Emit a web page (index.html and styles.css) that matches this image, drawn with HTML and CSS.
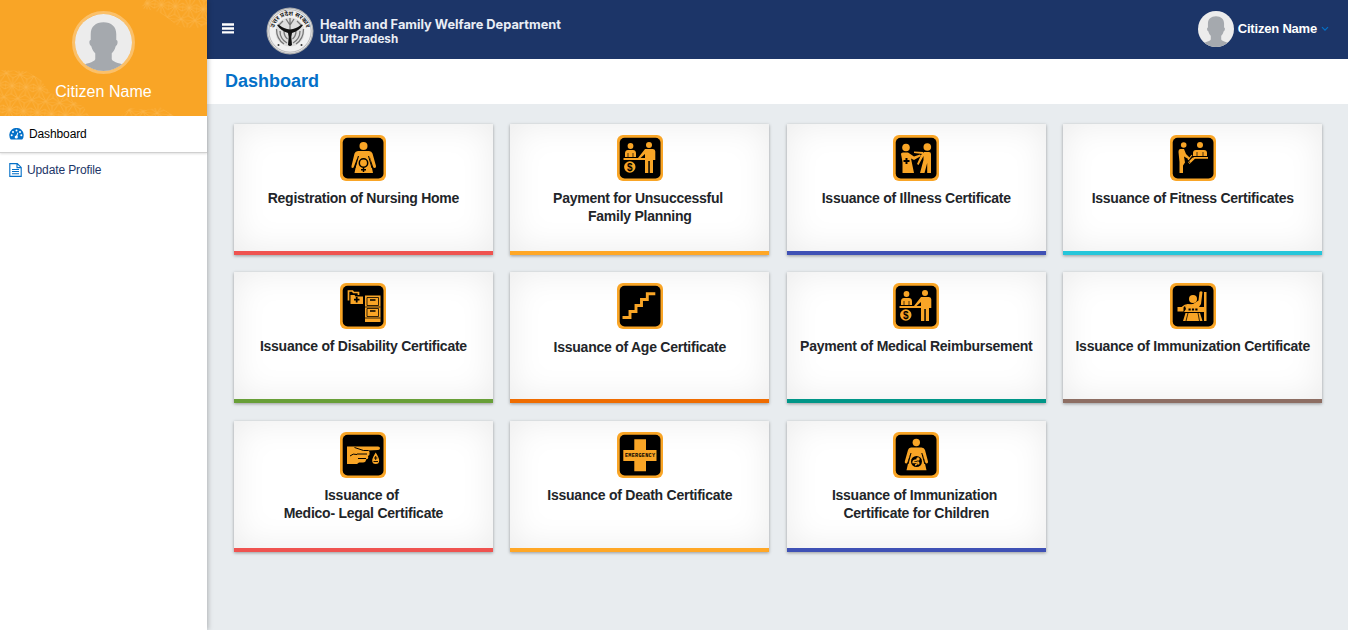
FILE: index.html
```html
<!DOCTYPE html>
<html lang="en">
<head>
<meta charset="utf-8">
<title>Dashboard</title>
<link rel="stylesheet" href="styles.css">
</head>
<body>
<svg class="defs" aria-hidden="true">
  <defs>
    <symbol id="avatar" viewBox="0 0 58 58">
      <rect width="58" height="58" fill="#ececec"/>
      <path fill="#a5a9ae" d="M29 8.500c8 0 13 4.500 13 12v6c2 0 1.800 5-.6 6.200-1 3.800-2.300 5.300-4 7.300v6c1.300 3.500 10 4 14.600 7V58H6v-5c4.600-3 13.300-3.500 14.600-7v-6c-1.700-2-3-3.500-4-7.300-2.400-1.200-2.600-6.200-.6-6.200v-6c0-7.500 5-12 13-12z"/>
    </symbol>
    <symbol id="frame" viewBox="0 0 46 46">
      <rect width="46" height="46" rx="6" fill="#f9a526"/>
      <rect x="2.700" y="2.700" width="40.800" height="40.800" rx="5" fill="#000"/>
    </symbol>
    <symbol id="counter" viewBox="0 0 46 46">
      <g fill="#f9a526">
        <circle cx="13.500" cy="11" r="2.900"/>
        <path d="M8 22v-3.500Q8 15 11 15h5q3 0 3 3.500V22zM6.500 23H38v2H6.500z"/>
        <circle cx="32" cy="10" r="3"/>
        <path d="M28 14h8q2.300 0 2.300 2.500V25H36v13h-3.200V26h-1.500v12H28V19l-4.500 4H21z"/>
        <circle cx="12.800" cy="32" r="5.700"/>
      </g>
      <path d="M11 18v4M16 18v4" stroke="#000" stroke-width=".7"/>
      <text class="dollar" x="12.800" y="35.600" text-anchor="middle">$</text>
    </symbol>
    <pattern id="mesh" width="14" height="24" patternUnits="userSpaceOnUse" patternTransform="rotate(6)">
      <path d="M0 0h14M0 12h14M0 0l7 12 7-12M0 24l7-12 7 12M0 0l7 4 7-4M7 4v8M0 24l7-4 7 4M7 20v-8M0 8l7 4M14 8l-7 4M0 8v8l7-4 7 4" fill="none" stroke="#ffc873" stroke-width=".7"/>
    </pattern>
  </defs>
</svg>
<div class="layout">
  <aside class="sidebar">
    <div class="profile">
      <svg class="profile-mesh" viewBox="0 0 207 116">
        <path fill="url(#mesh)" d="M141 8l5-8h61v25l-10 3-18-1-10-8-10-7zM0 70l26 1 15 9 9 13 19 5 15 9 5 9H0zM121 116l9-8 16 2 14-3 14 9z"/>
      </svg>
      <svg class="profile-photo"><use href="#avatar"/></svg>
      <div class="profile-name">Citizen Name</div>
    </div>
    <nav>
      <a class="nav-item active">
        <svg width="15" height="12" viewBox="0 0 15 12"><path fill="#0470c8" d="M1.800 11.500A7.200 7.200 0 1 1 13.200 11.500z"/><g fill="#fff"><circle cx="2.700" cy="7.300" r="1"/><circle cx="4" cy="4" r="1"/><circle cx="7.500" cy="2.600" r="1"/><circle cx="11" cy="4" r="1"/><circle cx="12.300" cy="7.300" r="1"/><circle cx="7.300" cy="9" r="1.600"/><path d="M8.500 4.500l.8.300L8 9H6.700z"/></g></svg>
        <span>Dashboard</span>
      </a>
      <a class="nav-item">
        <svg width="13" height="14" viewBox="0 0 13 14"><path d="M.8.600h7.500l3.900 3.800v9H.8zM8 .6v4h4M3 6.500h7M3 8.500h7M3 10.700h7" fill="none" stroke="#0470c8" stroke-width="1.100"/></svg>
        <span>Update Profile</span>
      </a>
    </nav>
  </aside>
  <div class="main">
    <header class="topbar">
      <svg class="burger" viewBox="0 0 12 11"><path d="M0 .2h12v2.500H0zM0 4.200h12v2.500H0zM0 8.200h12v2.300H0z" fill="#fff"/></svg>
      <svg class="emblem" viewBox="0 0 48 48">
        <defs><path id="arc" d="M8 29a16.500 16.500 0 1 1 32 0"/></defs>
        <circle cx="24" cy="24" r="23.500" fill="#a9abad"/>
        <circle cx="24" cy="24" r="22.300" fill="#f1f1f1"/>
        <circle cx="24" cy="24" r="21.200" fill="none" stroke="#8b8c8e" stroke-width=".6"/>
        <circle cx="24" cy="25" r="14.500" fill="#dedede"/>
        <path d="M10.500 22q0 10 7.500 15M37.500 22q0 10-7.500 15M14 24q0 8 7 12M34 24q0 8-7 12M18 24q0 5 3.500 8M30 24q0 5-3.500 8M17 14l-4 4M31 14l4 4M20 12l4 6 4-6M24 11v12" stroke="#777" stroke-width="1.300" fill="none"/>
        <path d="M11 18l1.500-.5Q18 22 24 22.500 30 22 35.500 17.500l1.500.5q-4 6-11 8l-.7 4 .7 8q-2 2-4 0l.7-8-.7-4q-7-2-11-8z" fill="#111"/>
        <text class="emblem-text"><textPath href="#arc" startOffset="50%" text-anchor="middle">उत्तर प्रदेश सरकार</textPath></text>
        <circle cx="12.500" cy="38" r="1" fill="#333"/><circle cx="35.500" cy="38" r="1" fill="#333"/>
      </svg>
      <div class="brand">
        <div class="brand-title">Health and Family Welfare Department</div>
        <div class="brand-sub">Uttar Pradesh</div>
      </div>
      <div class="user">
        <svg class="user-photo"><use href="#avatar"/></svg>
        <span>Citizen Name</span>
        <svg width="8" height="6" viewBox="0 0 8 6"><path d="M1 1.200l3 3 3-3" fill="none" stroke="#0470c8" stroke-width="1.200"/></svg>
      </div>
    </header>
    <div class="page-head"><h1>Dashboard</h1></div>
    <main class="cards">
      <article class="card red">
        <svg class="icon" viewBox="0 0 46 46"><use href="#frame"/>
          <g fill="#f9a526"><circle cx="23.500" cy="11" r="4"/><path d="M18 16h11q2.700 0 3.500 2.500L36 31q.4 2-1.500 2-1 0-1.500-1.500L29.500 21 33 38H14.500L18 21l-4 10.500q-.5 1.500-1.500 1.500-1.500 0-1-2l3-12.500Q15.300 16 18 16z"/></g>
          <path d="M18.500 21L15 33M28.500 21L32 33" stroke="#000"/>
          <circle cx="23.500" cy="28" r="4.200" fill="none" stroke="#000" stroke-width="1.500"/><path d="M23.500 32v5M21 34.700h5" stroke="#000" stroke-width="1.500"/>
        </svg>
        <h2>Registration of Nursing Home</h2>
      </article>
      <article class="card amber">
        <svg class="icon" viewBox="0 0 46 46"><use href="#frame"/><use href="#counter"/></svg>
        <h2>Payment for Unsuccessful&nbsp;<br>Family Planning</h2>
      </article>
      <article class="card indigo">
        <svg class="icon" viewBox="0 0 46 46"><use href="#frame"/>
          <g fill="#f9a526"><circle cx="13" cy="12.500" r="3.800"/><path d="M10 17.500h5l6 4 6-2 1 1.500-7 4-3-1.500 3 14.500H9.500V27L8 19q0-1.500 2-1.500zM21 16.500l9 .5v2l-9-1z"/><circle cx="34.300" cy="12" r="3.800"/><path d="M31 17h5q2 0 2 2v19h-3.800V28L31.500 38H27l3.500-13v-4l-5 9-1.500-1L28 20z"/></g>
          <path d="M13.500 23v6M10.500 26h6" stroke="#000" stroke-width="2"/>
        </svg>
        <h2>Issuance of Illness Certificate</h2>
      </article>
      <article class="card cyan">
        <svg class="icon" viewBox="0 0 46 46"><use href="#frame"/>
          <g fill="#f9a526"><circle cx="13.700" cy="10" r="2.800"/><path d="M10.500 14h3.500l2 5 4 4-1 1.500-5-3 1 6-2 3v7.500H9.500V27L8.500 17q0-3 2-3z"/><circle cx="30" cy="10" r="3"/><path d="M23 21v-3q0-3 3-3h8q3 0 3 3v3z"/><path d="M18 27l6-5h14v1.800H25L19.500 29z"/></g>
          <path d="M27 17v4M33 17v4M20 28l-2-3" stroke="#000" stroke-width=".7"/><path d="M18 25l4-5M20 26.500l3-3.500" stroke="#f9a526" stroke-width="1.200"/>
        </svg>
        <h2>Issuance of Fitness Certificates</h2>
      </article>
      <article class="card green">
        <svg class="icon" viewBox="0 0 46 46"><use href="#frame"/>
          <path d="M8.500 17.500V8h4l1 1.500h5v2.500" fill="none" stroke="#f9a526" stroke-width="1.700"/>
          <path fill="#f9a526" d="M10.500 12h4l1 1.500h7.500V21H10.500zM25 12.500h15.500V39H25z"/>
          <path d="M16.700 14v5.500M14 16.700h5.500" stroke="#000" stroke-width="1.800"/>
          <g fill="none" stroke="#000" stroke-width=".8"><path d="M27 14.500h11.500v8H27zM27 25.500h11.500v8H27zM25 24h15.500M25 35h15.500"/><path d="M30 17h5.500M30 28h5.500" stroke-width="1.500"/></g>
        </svg>
        <h2>Issuance of Disability Certificate</h2>
      </article>
      <article class="card orange lower">
        <svg class="icon" viewBox="0 0 46 46"><use href="#frame"/>
          <path d="M5.500 34.500H13v-6h6v-6h5.500v-6h5.800v-5.700h8" fill="none" stroke="#f9a526" stroke-width="2.900"/>
        </svg>
        <h2>Issuance of Age Certificate</h2>
      </article>
      <article class="card teal">
        <svg class="icon" viewBox="0 0 46 46"><use href="#frame"/><use href="#counter"/></svg>
        <h2>Payment of Medical Reimbursement</h2>
      </article>
      <article class="card brown">
        <svg class="icon" viewBox="0 0 46 46"><use href="#frame"/>
          <g fill="#f9a526"><circle cx="23" cy="16" r="4"/><path d="M7.500 24h6v4.500h-6zM34 9h2.500v29H34zM28 24h8v5h-8zM15 23q2-2 8-2l5.500-3.500L29.500 9q1.500-1.500 3 0L31 21l-2 3v5H14l2-3z"/><path d="M15.500 30H30l2.500 8H13z"/></g>
          <path d="M12 24.500q5-5 10-1.500" fill="none" stroke="#f9a526" stroke-width="1.300"/><path d="M18.500 26.500h9.500" stroke="#000" stroke-width="2.200" stroke-dasharray="2.200 1.200"/><path d="M18 30l-2 8M28 30l1.500 8" stroke="#000" stroke-width=".8"/>
        </svg>
        <h2>Issuance of Immunization Certificate</h2>
      </article>
      <article class="card red">
        <svg class="icon" viewBox="0 0 46 46"><use href="#frame"/>
          <path fill="#f9a526" d="M7 14.500h31q2 0 2 1.800t-2 1.800l-10.500.4q2.500.5 2 2.500.5 2.500-1.500 3 1 3-2 3.500 0 3-3 3h-4L17 32H7z"/>
          <path d="M14.500 15.500l9 3h5M17 22h10M18 26.500h8M10 24q3-3 7-1.500" stroke="#000" fill="none"/>
          <path fill="#f9a526" d="M35.700 20.500q3.500 5.500 3.500 8a3.500 3.500 0 0 1-7 0q0-2.500 3.500-8z"/><path d="M35.700 24v4M34 26h3.400M33.500 29.500h4.500" stroke="#000" stroke-width=".9"/>
        </svg>
        <h2>Issuance of&nbsp;<br>Medico- Legal Certificate</h2>
      </article>
      <article class="card amber">
        <svg class="icon" viewBox="0 0 46 46"><use href="#frame"/>
          <path fill="#f9a526" d="M17.300 7.300H29V18h10.500v11H29v10.300H17.300V29H6.300V18h11z"/>
          <text class="emergency" x="23" y="25.300" text-anchor="middle" textLength="30" lengthAdjust="spacing">EMERGENCY</text>
        </svg>
        <h2>Issuance of Death Certificate</h2>
      </article>
      <article class="card indigo">
        <svg class="icon" viewBox="0 0 46 46"><use href="#frame"/>
          <g fill="#f9a526"><circle cx="23.300" cy="10.500" r="3.700"/><path d="M18 15.500h10.500q2.800 0 3.500 2.500l3 11.500q.3 2-1.400 2-1 0-1.400-1.300L29.500 21l4 17.300h-20L17.500 21l-3 9.200q-.4 1.300-1.400 1.300-1.700 0-1.300-2L15 18q.6-2.500 3-2.500z"/></g>
          <path d="M18 21l-3 11M28.800 21l3 11" stroke="#000"/><circle cx="23.500" cy="29.500" r="5.500"/><circle cx="25" cy="27" r="1.700" fill="#f9a526"/><path d="M24 28q-4 0-4 2.500h4q1 2-2 2.500M24.500 29.500q2 1 1 3" fill="none" stroke="#f9a526" stroke-width="1.300"/>
        </svg>
        <h2>Issuance of Immunization&nbsp;<br>Certificate for Children</h2>
      </article>
    </main>
  </div>
</div>
</body>
</html>
```
FILE: styles.css
```css
* { box-sizing: border-box; }
body {
  margin: 0;
  height: 630px;
  overflow: hidden;
  background: #e8ecef;
  font-family: "Liberation Sans", Arial, sans-serif;
}
h1, h2 { margin: 0; }
.defs { position: absolute; width: 0; height: 0; }
.layout { display: flex; height: 630px; }

.sidebar {
  position: relative;
  z-index: 1;
  flex: 0 0 207px;
  background: #fff;
  box-shadow: 1px 0 5px rgba(0, 0, 0, .25);
}
.profile {
  position: relative;
  height: 116px;
  padding-top: 11px;
  background: #f9a526;
  text-align: center;
}
.profile-mesh { position: absolute; inset: 0; width: 207px; height: 116px; opacity: .5; }
.profile-photo {
  position: relative;
  display: block;
  width: 63px;
  height: 63px;
  margin: 0 auto;
  border: 3px solid #fbc069;
  border-radius: 50%;
}
.profile-name {
  position: relative;
  margin-top: 9px;
  font-size: 16px;
  line-height: 18px;
  letter-spacing: .05px;
  color: #fff;
}
.nav-item {
  display: flex;
  align-items: center;
  gap: 5px;
  height: 34px;
  padding-left: 9px;
  font-size: 12px;
  letter-spacing: -.12px;
  color: #1c3568;
}
.nav-item.active {
  height: 37px;
  padding-bottom: 1px;
  color: #000;
  border-bottom: 1px solid #d0d0d0;
  box-shadow: 0 1px 2px rgba(0, 0, 0, .12);
}

.main { flex: 1; }
.topbar {
  display: flex;
  height: 59px;
  padding: 0 19px 0 15px;
  background: #1c3568;
  color: #fff;
}
.burger { width: 12px; height: 11px; margin: 23px 32px 0 0; }
.emblem { width: 48px; height: 48px; margin-top: 7px; }
.emblem-text { font: bold 6.200px "Noto Sans", sans-serif; fill: #222; }
.brand { margin: 16px 0 0 6px; font-family: Inter, sans-serif; font-weight: 700; white-space: nowrap; color: #e9edf5; }
.brand-title { font-size: 12.800px; line-height: 17px; }
.brand-sub { font-size: 11.700px; line-height: 12px; }
.user { display: flex; align-items: center; gap: 4px; height: 57px; margin-left: auto; font-size: 13px; letter-spacing: -.2px; font-weight: bold; }
.user-photo { width: 36px; height: 36px; border-radius: 50%; }

.page-head { height: 45px; padding: 12px 18px; background: #fff; }
.page-head h1 { font-size: 18px; line-height: 20px; color: #0470c8; }

.cards {
  display: grid;
  grid-template-columns: repeat(4, 259.200px);
  grid-auto-rows: 131px;
  gap: 17.400px 17.250px;
  padding: 20px 0 0 26.800px;
}
.card {
  display: flex;
  flex-direction: column;
  align-items: center;
  padding-top: 11px;
  background: #fff;
  border-bottom: 4px solid;
  box-shadow: 0 1px 3px rgba(0, 0, 0, .35), inset 0 0 35px rgba(0, 0, 0, .08);
}
.card.lower h2 { padding-top: 1px; }
.icon { width: 46px; height: 46px; }
.card h2 { margin-top: 8px; font-size: 14px; letter-spacing: -.25px; line-height: 18px; text-align: center; white-space: nowrap; color: #222529; }
.dollar { font: bold 10px "Liberation Sans", sans-serif; fill: #000; }
.emergency { font: bold 5.200px "Liberation Mono", monospace; letter-spacing: 0; fill: #000; }
.red { border-color: #ef5350; }
.amber { border-color: #ffa726; }
.indigo { border-color: #3f51b5; }
.cyan { border-color: #26c6da; }
.green { border-color: #689f38; }
.orange { border-color: #ef6c00; }
.teal { border-color: #009688; }
.brown { border-color: #8d6e63; }
```
